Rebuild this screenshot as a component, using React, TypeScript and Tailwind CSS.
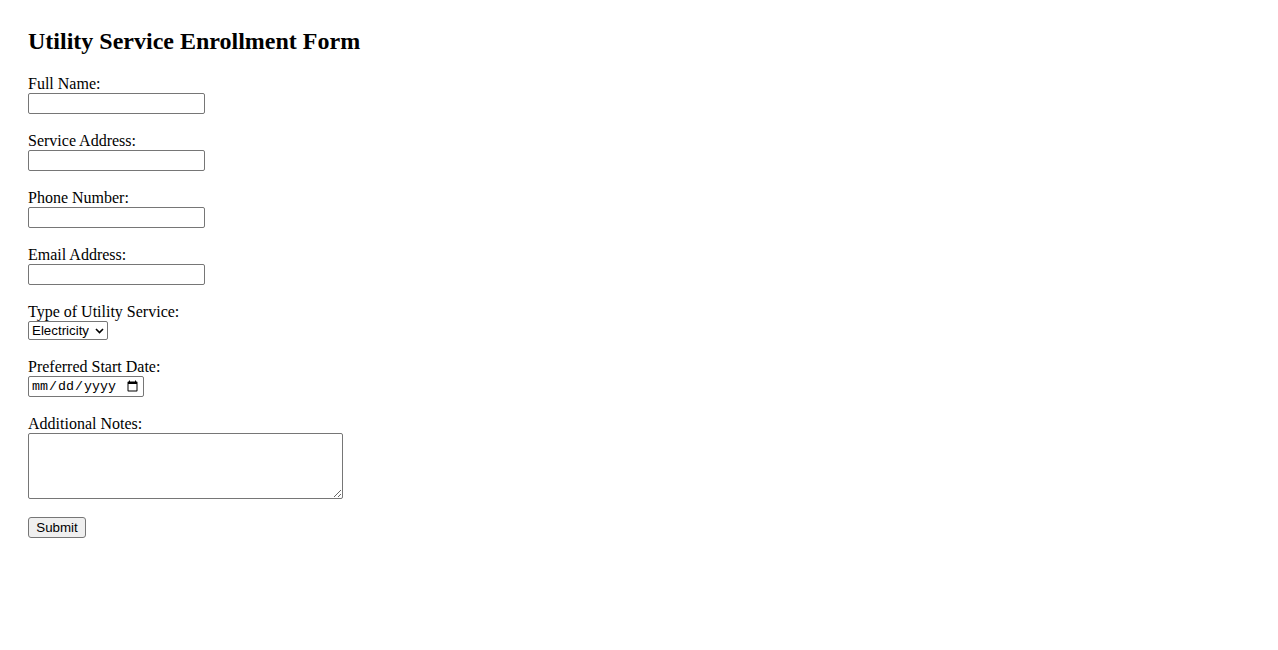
import React from "react";

const inputCls =
  "box-border w-[177px] h-[21px] border border-[#767676] rounded-[2px] bg-white px-[2px] py-[1px] text-[13.333px] leading-[normal] font-['Liberation_Sans',Arial,sans-serif] align-baseline";

export default function App() {
  return (
    <div className="min-h-[650px] bg-white text-black font-['Liberation_Serif','Times_New_Roman',serif] text-[16px] leading-[normal] pt-[28px] pl-[28px]">
      <h2 className="text-[24px] font-bold leading-[normal] mb-[19.92px]">Utility Service Enrollment Form</h2>
      <form onSubmit={(e) => e.preventDefault()}>
        <label>Full Name:</label>
        <br />
        <input type="text" className={inputCls} />
        <br />
        <br />
        <label>Service Address:</label>
        <br />
        <input type="text" className={inputCls} />
        <br />
        <br />
        <label>Phone Number:</label>
        <br />
        <input type="tel" className={inputCls} />
        <br />
        <br />
        <label>Email Address:</label>
        <br />
        <input type="email" className={inputCls} />
        <br />
        <br />
        <label>Type of Utility Service:</label>
        <br />
        <span className="relative inline-block align-baseline">
          <select className="appearance-none box-border w-[80px] h-[19px] border border-[#767676] rounded-[2px] bg-white pl-[3px] pr-[18px] text-[13.333px] leading-[normal] font-['Liberation_Sans',Arial,sans-serif] align-baseline">
            <option>Electricity</option>
            <option>Gas</option>
            <option>Water</option>
          </select>
          <svg
            className="pointer-events-none absolute right-[4px] top-[7px]"
            width="9"
            height="6"
            viewBox="0 0 9 6"
          >
            <path d="M1 1 L4.5 4.5 L8 1" fill="none" stroke="#000" strokeWidth="1.6" />
          </svg>
        </span>
        <br />
        <br />
        <label>Preferred Start Date:</label>
        <br />
        <input
          type="date"
          className="box-border w-[116px] h-[21px] border border-[#767676] rounded-[2px] bg-white px-[2px] py-[1px] text-[13.333px] leading-[normal] font-['Liberation_Mono',monospace] align-baseline"
        />
        <br />
        <br />
        <label>Additional Notes:</label>
        <br />
        <textarea className="box-border w-[315px] h-[66px] border border-[#767676] rounded-[2px] bg-white px-[2px] py-[2px] text-[13.333px] font-['Liberation_Mono',monospace] align-bottom" />
        <br />
        <br />
        <button
          type="submit"
          className="box-border w-[58px] h-[21px] border border-[#767676] rounded-[3px] bg-[#efefef] px-[6px] py-[1px] text-[13.333px] leading-[normal] font-['Liberation_Sans',Arial,sans-serif] text-black align-baseline"
        >
          Submit
        </button>
      </form>
    </div>
  );
}
